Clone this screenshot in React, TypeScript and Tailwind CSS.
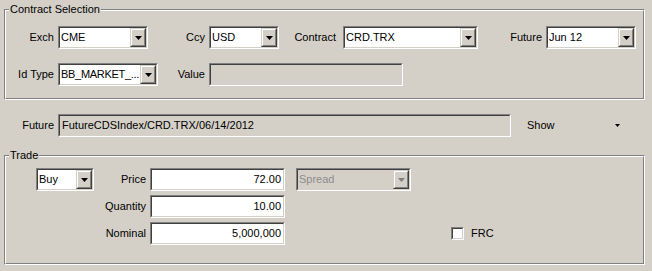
import type { ReactNode } from 'react';

// classic win32 3D edges
function Sunken({ className = '', children }: { className?: string; children?: ReactNode }) {
  return (
    <div className={`border border-t-[#808080] border-l-[#808080] border-r-white border-b-white ${className}`}>
      <div className="h-full border border-t-[#404040] border-l-[#404040] border-r-[#d4d0c8] border-b-[#d4d0c8]">
        {children}
      </div>
    </div>
  );
}

function Arrow({ color = '#000' }: { color?: string }) {
  return (
    <svg width="7" height="4" viewBox="0 0 7 4">
      <polygon points="0,0 7,0 3.5,4" fill={color} />
    </svg>
  );
}

function DropButton({ disabled = false }: { disabled?: boolean }) {
  return (
    <div className="h-full w-[16px] shrink-0 border border-t-[#d4d0c8] border-l-[#d4d0c8] border-r-[#404040] border-b-[#404040]">
      <div className="h-full flex items-center justify-center bg-[#d4d0c8] border border-t-white border-l-white border-r-[#808080] border-b-[#808080]">
        <Arrow color={disabled ? '#808080' : '#000'} />
      </div>
    </div>
  );
}

function Combo({ value, width, disabled = false, tight = false }: { value: string; width: string; disabled?: boolean; tight?: boolean }) {
  return (
    <Sunken className={`${width} h-[23px]`}>
      <div className={`h-full flex ${disabled ? 'bg-[#d4d0c8]' : 'bg-white'}`}>
        <span
          className={`flex-1 min-w-0 flex items-center pl-[1px] whitespace-nowrap overflow-hidden ${tight ? 'tracking-[-0.3px]' : ''} ${disabled ? 'text-[#8c8c8c]' : ''}`}
        >
          {value}
        </span>
        <DropButton disabled={disabled} />
      </div>
    </Sunken>
  );
}

function Field({ value = '', width, disabled = false, right = false }: { value?: string; width: string; disabled?: boolean; right?: boolean }) {
  return (
    <Sunken className={`${width} h-[23px]`}>
      <div className={`h-full flex items-center px-[2px] ${right ? 'justify-end' : ''} ${disabled ? 'bg-[#d4d0c8]' : 'bg-white'}`}>
        {value}
      </div>
    </Sunken>
  );
}

function Label({ text, width, gap = 'mr-[4px]' }: { text: string; width: string; gap?: string }) {
  return <span className={`${width} ${gap} text-right shrink-0`}>{text}</span>;
}

function GroupBox({ title, className = '', children }: { title: string; className?: string; children: ReactNode }) {
  return (
    <div className={`relative mx-[4px] w-[641px] border border-t-[#808080] border-l-[#808080] border-r-white border-b-white ${className}`}>
      <div className="h-full border border-t-white border-l-white border-r-[#808080] border-b-[#808080]">
        {children}
      </div>
      <span className="absolute -top-[8px] left-[4px] px-[1px] leading-[14px] bg-[#d4d0c8]">{title}</span>
    </div>
  );
}

export default function App() {
  return (
    <div className="w-[652px] h-[271px] overflow-hidden bg-[#d4d0c8] text-black text-[11px] leading-[13px] font-['Liberation_Sans',Arial,sans-serif] pt-[9px]">
      {/* Contract Selection */}
      <GroupBox title="Contract Selection" className="h-[91px]">
        <div className="pt-[15px]">
          <div className="flex items-center">
            <Label text="Exch" width="w-[48px]" />
            <Combo value="CME" width="w-[90px]" />
            <Label text="Ccy" width="w-[57px]" />
            <Combo value="USD" width="w-[70px]" />
            <Label text="Contract" width="w-[57px]" gap="mr-[7px]" />
            <Combo value="CRD.TRX" width="w-[135px]" />
            <Label text="Future" width="w-[64px]" />
            <Combo value="Jun 12" width="w-[90px]" />
          </div>
          <div className="flex items-center mt-[14px]">
            <Label text="Id Type" width="w-[48px]" />
            <Combo value="BB_MARKET_..." width="w-[100px]" tight />
            <Label text="Value" width="w-[47px]" />
            <Field width="w-[194px]" disabled />
          </div>
        </div>
      </GroupBox>

      {/* Future */}
      <div className="flex items-center mt-[14px]">
        <Label text="Future" width="w-[54px]" />
        <Field value="FutureCDSIndex/CRD.TRX/06/14/2012" width="w-[453px]" disabled />
        <div className="ml-[16px] w-[96px] flex items-center justify-between pr-[3px]">
          <span>Show</span>
          <svg width="5" height="3" viewBox="0 0 5 3">
            <polygon points="0,0 5,0 2.5,3" fill="#000" />
          </svg>
        </div>
      </div>

      {/* Trade */}
      <GroupBox title="Trade" className="h-[110px] mt-[18px]">
        <div className="pt-[11px]">
          <div className="flex items-center pl-[30px]">
            <Combo value="Buy" width="w-[58px]" />
            <Label text="Price" width="w-[52px]" />
            <Field value="72.00" width="w-[135px]" right />
            <div className="ml-[11px]">
              <Combo value="Spread" width="w-[115px]" disabled />
            </div>
          </div>
          <div className="flex items-center mt-[4px]">
            <Label text="Quantity" width="w-[140px]" />
            <Field value="10.00" width="w-[135px]" right />
          </div>
          <div className="flex items-center mt-[4px]">
            <Label text="Nominal" width="w-[140px]" />
            <Field value="5,000,000" width="w-[135px]" right />
            <Sunken className="ml-[166px] w-[13px] h-[13px]">
              <div className="h-full bg-white" />
            </Sunken>
            <span className="ml-[7px]">FRC</span>
          </div>
        </div>
      </GroupBox>
    </div>
  );
}
